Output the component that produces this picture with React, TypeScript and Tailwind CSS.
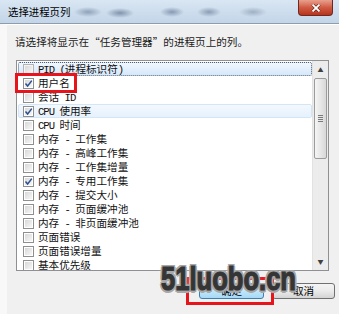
import React from "react"

type Row = { label: string; checked?: boolean; state?: "focus" | "hover"; dim?: boolean }

const rows: Row[] = [
  { label: "PID (进程标识符)", state: "focus", dim: true },
  { label: "用户名", checked: true },
  { label: "会话 ID" },
  { label: "CPU 使用率", checked: true, state: "hover" },
  { label: "CPU 时间" },
  { label: "内存 - 工作集" },
  { label: "内存 - 高峰工作集" },
  { label: "内存 - 工作集增量" },
  { label: "内存 - 专用工作集", checked: true },
  { label: "内存 - 提交大小" },
  { label: "内存 - 页面缓冲池" },
  { label: "内存 - 非页面缓冲池" },
  { label: "页面错误" },
  { label: "页面错误增量" },
  { label: "基本优先级" },
]

// SimSun-like half-width latin runs
function Label({ text }: { text: string }) {
  const parts = text.split(/([\x20-\x7e]+)/)
  return (
    <span className="whitespace-pre">
      {parts.map((p, i) =>
        i % 2 ? (
          <span key={i} className="font-['Liberation_Mono',monospace] tracking-[-1px]">
            {p}
          </span>
        ) : (
          p
        )
      )}
    </span>
  )
}

function Checkbox({ checked, dim }: { checked?: boolean; dim?: boolean }) {
  return (
    <div
      className={`w-[11px] h-[11px] shrink-0 border p-[1px] ${
        dim ? "border-[#b4b4b4] bg-[#f4f4f4]" : "border-[#8e8f8f] bg-white"
      }`}
    >
      <div className="w-full h-full bg-gradient-to-br from-[#d8d8d8] to-[#f7f7f7] relative">
        {checked && (
          <svg viewBox="0 0 9 9" className="absolute -left-[1px] -top-[1px] w-[9px] h-[9px]">
            <path d="M1.5 4.6 L3.6 7 L7.8 1.6" fill="none" stroke="#2c4f90" strokeWidth="1.5" />
          </svg>
        )}
      </div>
    </div>
  )
}

function ListRow({ row }: { row: Row }) {
  let look = "border-transparent"
  if (row.state === "focus")
    look = "border-dotted border-[#4f5d70] bg-gradient-to-b from-[#f1f7fe] to-[#d5e8fb]"
  if (row.state === "hover") look = "border-[#d3e6f8] bg-gradient-to-b from-[#f3f8fe] to-[#e6f1fc]"
  return (
    <div className={`flex items-center h-[14px] pl-[4px] border rounded-[2px] ${look}`}>
      <Checkbox checked={row.checked} dim={row.dim} />
      <div className="ml-[4px] text-[10.6px] leading-[14px] text-[#111]">
        <Label text={row.label} />
      </div>
    </div>
  )
}

function ScrollBar() {
  return (
    <div className="w-[16px] h-full flex flex-col bg-[#ececec] border-l border-[#e2e2e2]">
      <div className="h-[17px] flex items-center justify-center text-[6px] text-[#404040]">▲</div>
      <div className="h-[81px] mx-[1px] rounded-[2px] border border-[#9b9b9b] bg-gradient-to-r from-[#f5f5f5] to-[#d8d8d8] flex flex-col items-center justify-center gap-[1px]">
        <div className="w-[5px] h-[1px] bg-[#7a7a7a]" />
        <div className="w-[5px] h-[1px] bg-[#7a7a7a]" />
        <div className="w-[5px] h-[1px] bg-[#7a7a7a]" />
        <div className="w-[5px] h-[1px] bg-[#7a7a7a]" />
      </div>
      <div className="flex-1" />
      <div className="h-[17px] flex items-center justify-center text-[6px] text-[#404040]">▼</div>
    </div>
  )
}

export default function App() {
  return (
    <div className="relative w-[339px] h-[314px] overflow-hidden bg-[#f0f0f0] font-['Noto_Sans_CJK_SC',sans-serif]">
      {/* Title bar */}
      <div className="h-[24px] flex justify-between border-b border-[#8f9cab] bg-[radial-gradient(ellipse_14px_5px_at_88px_12px,#8ea1b8,transparent),radial-gradient(ellipse_14px_5px_at_120px_13px,#7f93ab,transparent),radial-gradient(ellipse_12px_5px_at_172px_12px,#8699b1,transparent),radial-gradient(ellipse_12px_5px_at_209px_12px,#8a9db4,transparent),radial-gradient(ellipse_14px_5px_at_253px_12px,#9fb0c4,transparent),linear-gradient(to_bottom,#d9e6f3,#c3d5e8)]">
        <div className="pl-[8px] text-[10.4px] leading-[24px] text-black">选择进程页列</div>
        <div className="pr-[6px]">
          <div className="w-[35px] h-[16px] flex items-center justify-center rounded-b-[4px] border border-t-0 border-[#6e2a20] bg-gradient-to-b from-[#e8a08f] via-[#d05a42] to-[#b8331c]">
            <svg viewBox="0 0 10 8" className="w-[10px] h-[8px]">
              <path d="M1.5 0.5 L8.5 7.5 M8.5 0.5 L1.5 7.5" stroke="#5a1b10" strokeWidth="3" />
              <path d="M1.5 0.5 L8.5 7.5 M8.5 0.5 L1.5 7.5" stroke="#ffffff" strokeWidth="1.8" />
            </svg>
          </div>
        </div>
      </div>

      {/* Body */}
      <div className="h-[290px] border-t border-white border-l-[7px] border-l-[#f8f8f8]">
        <div className="pt-[10px] pl-[8px] text-[10.6px] leading-[14px] text-[#1a1a1a]">
          请选择将显示在“任务管理器”的进程页上的列。
        </div>

        <div className="mt-[11px] ml-[9px] w-[313px] h-[211px] flex border border-[#8e9096] bg-white">
          <div className="flex-1 h-full overflow-hidden pt-[1px] pl-[1px]">
            {rows.map((r) => (
              <ListRow key={r.label} row={r} />
            ))}
          </div>
          <ScrollBar />
        </div>

        <div className="mt-[12px] pr-[4px] flex justify-end gap-[8px]">
          <div className="w-[65px] h-[16px] flex items-center justify-center rounded-[3px] border border-[#3c7fb1] bg-gradient-to-b from-[#eaf6fd] via-[#bee6fd] to-[#a7d9f5] text-[10.6px] leading-[14px] text-black">
            确定
          </div>
          <div className="w-[63px] h-[16px] flex items-center justify-center rounded-[3px] border border-[#707070] bg-gradient-to-b from-[#f4f4f4] via-[#ebebeb] to-[#d4d4d4] text-[10.6px] leading-[14px] text-black">
            取消
          </div>
        </div>
      </div>

      {/* Red highlight boxes */}
      <div className="absolute left-[15px] top-[73px] w-[62px] h-[20px] border-[3px] border-[#e8141c]" />
      <div className="absolute left-[186px] top-[277px] w-[88px] h-[28px] border-[3px] border-[#e8141c]" />

      {/* Watermark */}
      <div className="absolute left-[161px] top-[262px] origin-left scale-x-[0.775] font-['Liberation_Sans',sans-serif] font-bold text-[33px] leading-[33px] text-[#353535] whitespace-nowrap [-webkit-text-stroke:1.2px_#353535] [text-shadow:2.5px_0_0_#a8a8a8,-2.5px_0_0_#a8a8a8,0_2.5px_0_#a8a8a8,0_-2.5px_0_#a8a8a8,2px_2px_0_#a8a8a8,-2px_2px_0_#a8a8a8,2px_-2px_0_#a8a8a8,-2px_-2px_0_#a8a8a8,0_0_5px_#ffffff]">
        51luobo.cn
      </div>
    </div>
  )
}
